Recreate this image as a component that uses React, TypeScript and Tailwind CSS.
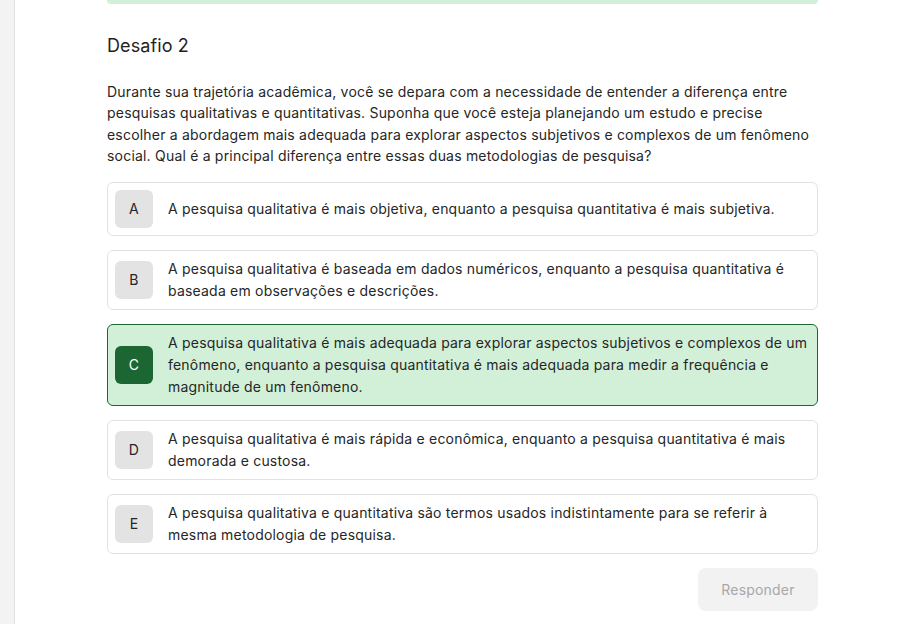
import React from "react";

const options = [
  { l: "A", t: "A pesquisa qualitativa é mais objetiva, enquanto a pesquisa quantitativa é mais subjetiva." },
  { l: "B", t: "A pesquisa qualitativa é baseada em dados numéricos, enquanto a pesquisa quantitativa é baseada em observações e descrições." },
  { l: "C", t: "A pesquisa qualitativa é mais adequada para explorar aspectos subjetivos e complexos de um fenômeno, enquanto a pesquisa quantitativa é mais adequada para medir a frequência e magnitude de um fenômeno.", sel: true },
  { l: "D", t: "A pesquisa qualitativa é mais rápida e econômica, enquanto a pesquisa quantitativa é mais demorada e custosa." },
  { l: "E", t: "A pesquisa qualitativa e quantitativa são termos usados indistintamente para se referir à mesma metodologia de pesquisa." },
];

export default function App() {
  return (
    <div className="flex w-[902px] h-[624px] overflow-hidden bg-white text-[#1f1f1f] tracking-[0.2px]" style={{ fontFamily: "Inter, 'Noto Sans', sans-serif" }}>
      <div className="w-[15px] shrink-0 bg-[#f3f3f3] border-r border-[#e2e2e2]" />
      <div className="flex-1 pl-[92px]">
        <div className="w-[711px] flex flex-col">
          <div className="h-[4px] bg-[#d2f0d8] rounded-b-[8px]" />
          <h2 className="mt-[28px] text-[18px] leading-[28px] font-normal text-[#1f1f1f] tracking-[0.1px]">Desafio 2</h2>
          <p className="mt-[21px] text-[14px] leading-[21.4px] text-[#262626]">
            Durante sua trajetória acadêmica, você se depara com a necessidade de entender a diferença entre pesquisas qualitativas e quantitativas. Suponha que você esteja planejando um estudo e precise escolher a abordagem mais adequada para explorar aspectos subjetivos e complexos de um fenômeno social. Qual é a principal diferença entre essas duas metodologias de pesquisa?
          </p>
          <div className="mt-[15px] flex flex-col gap-[14px]">
            {options.map((o) => (
              <div
                key={o.l}
                className={
                  o.sel
                    ? "flex items-center gap-[15px] rounded-[6px] border border-[#1e6631] bg-[#d2f0d8] p-[7px] pr-[6px]"
                    : "flex items-center gap-[15px] rounded-[6px] border border-[#e2e2e2] bg-white p-[7px] pr-[6px]"
                }
              >
                <div
                  className={
                    o.sel
                      ? "w-[38px] h-[38px] shrink-0 rounded-[6px] bg-[#1b6632] text-white flex items-center justify-center text-[14px]"
                      : "w-[38px] h-[38px] shrink-0 rounded-[6px] bg-[#e3e3e3] text-[#262626] flex items-center justify-center text-[14px]"
                  }
                >
                  {o.l}
                </div>
                <div className="text-[14px] leading-[22px] text-[#262626]">{o.t}</div>
              </div>
            ))}
          </div>
          <div className="mt-[14px] flex justify-end">
            <button className="w-[120px] h-[43px] rounded-[8px] bg-[#f2f2f2] text-[#a8a8a8] text-[14px]">Responder</button>
          </div>
        </div>
      </div>
    </div>
  );
}
